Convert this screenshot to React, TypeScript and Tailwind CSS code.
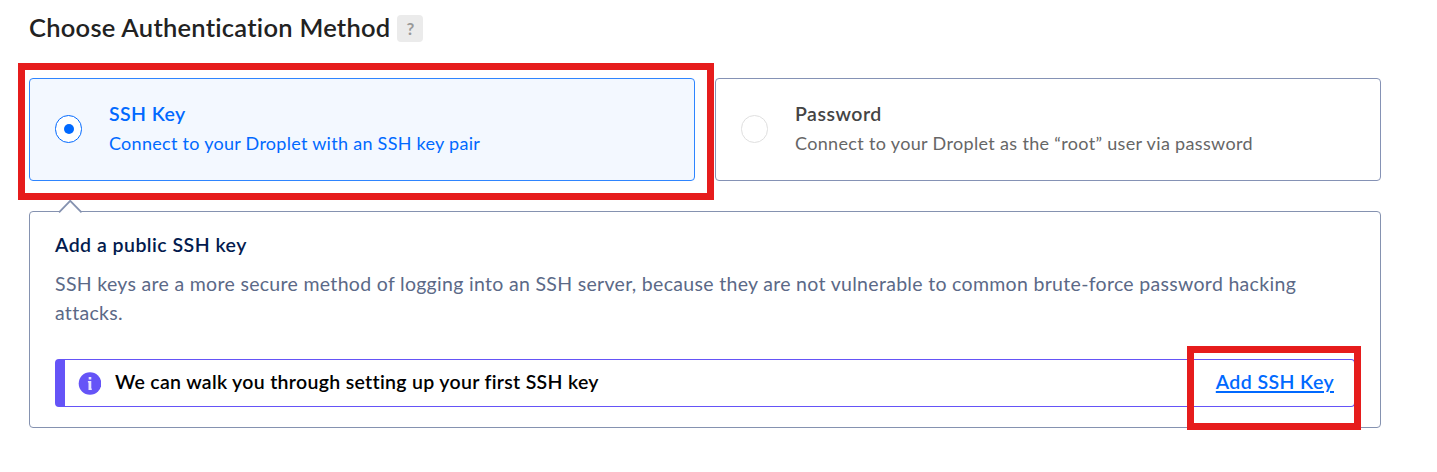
import React from "react";

type MethodCardProps = {
  title: string;
  description: string;
  selected?: boolean;
  titleClass: string;
  descriptionClass: string;
};

function MethodCard({ title, description, selected, titleClass, descriptionClass }: MethodCardProps) {
  return (
    <label
      className={
        selected
          ? "relative flex h-[103px] flex-1 items-center rounded-[4px] border border-[#2e85ff] bg-[#f3f8ff] pb-[2px] pl-[25px]"
          : "relative flex h-[103px] flex-1 items-center rounded-[4px] border border-[#8592b5] bg-white pb-[2px] pl-[25px]"
      }
    >
      <span
        className={
          selected
            ? "flex h-7 w-[27px] shrink-0 items-center justify-center rounded-full border border-[#0069ff] bg-white"
            : "h-7 w-[27px] shrink-0 rounded-full border border-[#dfdfdf] bg-white"
        }
      >
        {selected && <span className="size-[10px] rounded-full bg-[#0069ff]" />}
      </span>
      <span className="ml-[27px] flex flex-col whitespace-nowrap">
        <span className={titleClass}>{title}</span>
        <span className={descriptionClass}>{description}</span>
      </span>
      {selected && (
        <span className="absolute -top-4 -left-3 h-[137px] w-[696px] border-[7px] border-[#e61c1c]" />
      )}
    </label>
  );
}

export default function App() {
  return (
    <main className="h-[472px] w-[1437px] overflow-hidden bg-white pl-[29px] font-['Lato','Open_Sans',sans-serif]">
      <header className="flex h-[78px] items-start pt-[12px]">
        <h2 className="w-[368px] text-[25.5px] leading-[31px] font-semibold tracking-[0.26px] whitespace-nowrap text-[#222]">
          Choose Authentication Method
        </h2>
        <span className="mt-[3px] flex h-[27px] w-[26px] items-center justify-center rounded-[4px] bg-[#ebebeb] pl-px text-[17px] font-bold text-[#999]">
          ?
        </span>
      </header>

      <div className="flex w-[1352px] gap-5">
        <MethodCard
          title="SSH Key"
          description="Connect to your Droplet with an SSH key pair"
          selected
          titleClass="text-[19.5px] leading-[30px] font-semibold tracking-[0.4px] text-[#0069ff]"
          descriptionClass="text-[18px] leading-[29px] tracking-[0.28px] text-[#0069ff]"
        />
        <MethodCard
          title="Password"
          description="Connect to your Droplet as the “root” user via password"
          titleClass="text-[19.5px] leading-[30px] font-semibold tracking-[0.5px] text-[#444]"
          descriptionClass="text-[18px] leading-[29px] tracking-[0.34px] text-[#666]"
        />
      </div>

      <section className="relative mt-[30px] h-[217px] w-[1352px] rounded-[4px] border border-[#8592b0] px-[25px] pt-[18px]">
        <svg className="absolute -top-3 left-7 h-[13px] w-[25px]" viewBox="0 0 25 13" fill="none">
          <path d="M1 12.6 12.2 0.8 23.5 12.6Z" fill="#fff" />
          <path d="M1 12.3 12.2 0.8 23.5 12.3" stroke="#8592b0" strokeWidth="1.8" />
        </svg>
        <h3 className="text-[19.5px] leading-[29px] font-semibold tracking-[0.47px] whitespace-nowrap text-[#031b4e]">
          Add a public SSH key
        </h3>
        <p className="mt-[10px] text-[19.5px] leading-[29px] tracking-[0.31px] whitespace-nowrap text-[#5b6987]">
          <span>
            SSH keys are a more secure method of logging into an SSH server, because they are not vulnerable to common brute-force password hacking
          </span>
          <br />
          attacks.
        </p>
        <div className="relative mt-[32px] flex h-12 items-center rounded-[4px] border border-l-[10px] border-[#6554f7] pr-[20px] pl-[13px]">
          <svg className="size-[23px] shrink-0" viewBox="0 0 23 23">
            <circle cx="12" cy="11.5" r="11.3" fill="#6554f7" />
            <path d="M10.7 5h2.6v2.6h-2.6zM9.9 9h3.4v7.6h.5V18h-3.3v-7.6h-.6z" fill="#e8e6ff" />
          </svg>
          <span className="ml-[14px] pb-[2px] text-[19.5px] font-semibold tracking-[0.31px] whitespace-nowrap text-black">
            We can walk you through setting up your first SSH key
          </span>
          <a className="ml-auto pb-[2px] text-[19.5px] font-semibold tracking-[0.4px] whitespace-nowrap text-[#0069ff] underline decoration-2 underline-offset-2">
            Add SSH Key
          </a>
          <span className="absolute -top-[14px] -right-[7px] h-[84px] w-[174px] border-[7px] border-[#e61c1c]" />
        </div>
      </section>
    </main>
  );
}
